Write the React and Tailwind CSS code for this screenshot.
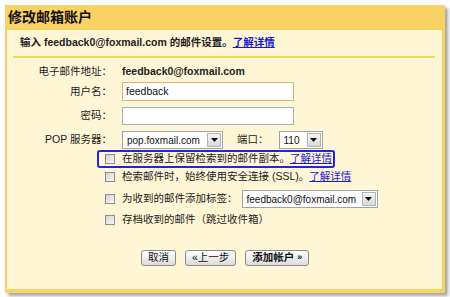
import React from 'react';

const font = { fontFamily: '"Liberation Sans", "Noto Sans CJK SC", sans-serif' };

const Arrow = () => (
    <span className="flex h-full w-[14px] shrink-0 items-center justify-center border border-[#b4b4b4] bg-gradient-to-b from-[#f4f4f4] to-[#d8d8d8]">
        <svg width="7" height="4" viewBox="0 0 7 4">
            <path d="M0 0h7L3.5 4z" fill="#111" />
        </svg>
    </span>
);

const Select = ({ value, width }) => (
    <div className={`flex h-[18px] ${width} items-center border border-[#9fa4ab] bg-white p-px`}>
        <span className="flex-1 overflow-hidden whitespace-nowrap pl-[3px] text-[10px] text-[#111]">{value}</span>
        <Arrow />
    </div>
);

const Checkbox = () => (
    <span className="inline-block h-[10px] w-[10px] shrink-0 border border-[#8e8f8f] bg-gradient-to-br from-[#d4d4d4] to-[#f8f8f8]" />
);

const Link = ({ children }) => <span className="text-[#1a1ad6] underline">{children}</span>;

const Button = ({ children, bold }) => (
    <span
        className={`flex h-[16px] items-center rounded-[3px] border border-[#8a8a8a] bg-gradient-to-b from-white to-[#dcdcdc] px-[6px] text-[10.5px] text-[#111] ${bold ? 'font-bold' : ''}`}
    >
        {children}
    </span>
);

export default function App() {
    return (
        <div className="h-[297px] w-[450px] bg-white pl-[5px] pt-[5px]" style={font}>
            <div className="flex h-[288px] w-[440px] flex-col bg-[#f9d266] shadow-[3px_3px_3px_rgba(0,0,0,0.35)]">
                {/* title bar */}
                <div className="flex h-[25px] items-center pl-[3px] text-[14px] font-bold text-[#111]">修改邮箱账户</div>

                <div className="mb-[4px] ml-[2px] mr-[3px] flex-1 bg-[#fff6d6] text-[10.5px] text-[#222]">
                    <div className="flex h-[26px] items-center pl-[13px] font-bold">
                        输入 feedback0@foxmail.com 的邮件设置。<Link>了解详情</Link>
                    </div>
                    <div className="ml-[6px] mr-[7px] h-[2px] bg-[#f9d266]" />

                    {/* email */}
                    <div className="mt-[5px] grid h-[18px] grid-cols-[105px_1fr] items-center gap-x-[10px]">
                        <span className="text-right">电子邮件地址：</span>
                        <span className="font-bold">feedback0@foxmail.com</span>
                    </div>

                    {/* username */}
                    <div className="mt-[1px] grid h-[19px] grid-cols-[105px_1fr] items-center gap-x-[10px]">
                        <span className="text-right">用户名：</span>
                        <div className="flex h-[19px] w-[172px] items-center border border-[#d9b36a] bg-white pl-[3px] text-[#111]">
                            feedback
                        </div>
                    </div>

                    {/* password */}
                    <div className="mt-[6px] grid h-[18px] grid-cols-[105px_1fr] items-center gap-x-[10px]">
                        <span className="text-right">密码：</span>
                        <div className="h-[18px] w-[172px] border border-[#aab0b8] bg-white" />
                    </div>

                    {/* pop server */}
                    <div className="mt-[6px] grid h-[18px] grid-cols-[105px_1fr] items-center gap-x-[10px]">
                        <span className="text-right">POP 服务器：</span>
                        <div className="flex items-center">
                            <Select value="pop.foxmail.com" width="w-[101px]" />
                            <span className="ml-[14px] mr-[10px]">端口：</span>
                            <Select value="110" width="w-[44px]" />
                        </div>
                    </div>

                    {/* options */}
                    <div className="mt-[1px] pl-[90px]">
                        <div className="flex h-[18px] w-[238px] items-center gap-[7px] rounded-[3px] border-2 border-[#2323e8] pl-[6px]">
                            <Checkbox />
                            <span>
                                在服务器上保留检索到的邮件副本。<Link>了解详情</Link>
                            </span>
                        </div>
                    </div>
                    <div className="flex h-[18px] items-center gap-[7px] pl-[98px]">
                        <Checkbox />
                        <span>
                            检索邮件时，始终使用安全连接 (SSL)。<Link>了解详情</Link>
                        </span>
                    </div>
                    <div className="mt-[4px] flex h-[18px] items-center gap-[7px] pl-[98px]">
                        <Checkbox />
                        <span className="-mr-[3px]">为收到的邮件添加标签：</span>
                        <Select value="feedback0@foxmail.com" width="w-[136px]" />
                    </div>
                    <div className="mt-[3px] flex h-[18px] items-center gap-[7px] pl-[98px]">
                        <Checkbox />
                        <span>存档收到的邮件（跳过收件箱）</span>
                    </div>

                    {/* actions */}
                    <div className="mt-[21px] flex items-center pl-[134px]">
                        <Button>取消</Button>
                        <span className="ml-[9px]">
                            <Button>«上一步</Button>
                        </span>
                        <span className="ml-[9px]">
                            <Button bold>
                                添加帐户 <span className="ml-[3px] text-[9px]">»</span>
                            </Button>
                        </span>
                    </div>
                </div>
            </div>
        </div>
    );
}
